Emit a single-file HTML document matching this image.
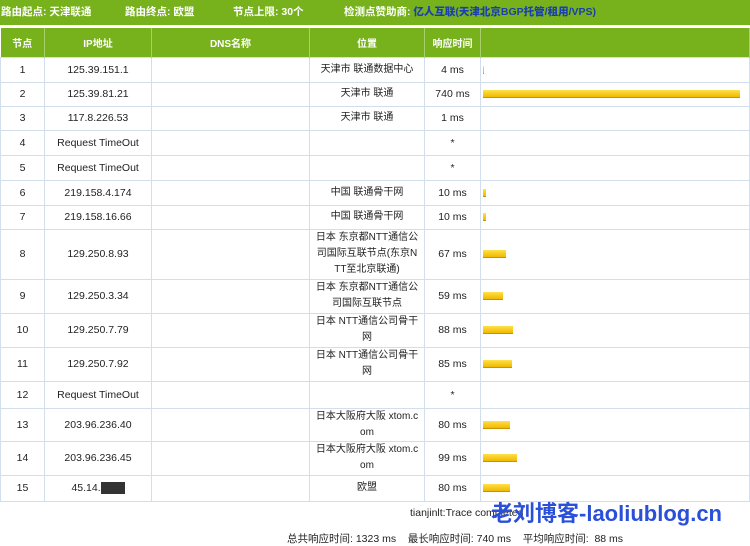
<!DOCTYPE html>
<html><head><meta charset="utf-8"><style>
*{margin:0;padding:0;box-sizing:border-box}
body{width:750px;height:545px;background:#fff;font-family:"Liberation Sans","Noto Sans CJK SC",sans-serif;font-size:10.5px;color:#222;position:relative;overflow:hidden}
.top{position:absolute;left:0;top:0;width:750px;height:25px;background:#77b21c;color:#fff;font-weight:bold;font-size:10.5px;line-height:25px;white-space:nowrap}
.top span{position:absolute;top:0}
table{position:absolute;left:0;top:28px;width:750px;border-collapse:collapse;table-layout:fixed}
th{background:#77b21c;color:#fff;font-weight:bold;height:29px;border-right:1px solid #a9d06a;font-size:10px}
td{border:1px solid #d2deec;text-align:center;line-height:16px;padding:0}
td.l{padding:0 4px;word-break:break-all;font-size:10px}
td.b{text-align:left;padding-left:2px}
.bar{display:block;height:8px;background:linear-gradient(#ffe14a,#f1b800);border-bottom:1px solid #c99300}
.foot{position:absolute;white-space:nowrap}
</style></head><body>
<div class="top"><span style="left:1px">路由起点: 天津联通</span><span style="left:125px">路由终点: 欧盟</span><span style="left:233px">节点上限: 30个</span><span style="left:344px">检测点赞助商: <b style="color:#1a3fb0">亿人互联</b><b style="color:#1a3fb0">(天津北京BGP托管/租用/VPS)</b></span></div>
<table>
<colgroup><col style="width:44px"><col style="width:107px"><col style="width:158px"><col style="width:115px"><col style="width:56px"><col></colgroup>
<tr><th>节点</th><th>IP地址</th><th>DNS名称</th><th>位置</th><th>响应时间</th><th></th></tr>
<tr style="height:25px"><td>1</td><td>125.39.151.1</td><td></td><td class="l">天津市 联通数据中心</td><td>4 ms</td><td class="b"><i class="bar" style="width:1px"></i></td></tr>
<tr style="height:24px"><td>2</td><td>125.39.81.21</td><td></td><td class="l">天津市 联通</td><td>740 ms</td><td class="b"><i class="bar" style="width:257px"></i></td></tr>
<tr style="height:24px"><td>3</td><td>117.8.226.53</td><td></td><td class="l">天津市 联通</td><td>1 ms</td><td></td></tr>
<tr style="height:25px"><td>4</td><td>Request TimeOut</td><td></td><td></td><td>*</td><td></td></tr>
<tr style="height:25px"><td>5</td><td>Request TimeOut</td><td></td><td></td><td>*</td><td></td></tr>
<tr style="height:25px"><td>6</td><td>219.158.4.174</td><td></td><td class="l">中国 联通骨干网</td><td>10 ms</td><td class="b"><i class="bar" style="width:3px"></i></td></tr>
<tr style="height:24px"><td>7</td><td>219.158.16.66</td><td></td><td class="l">中国 联通骨干网</td><td>10 ms</td><td class="b"><i class="bar" style="width:3px"></i></td></tr>
<tr style="height:50px"><td>8</td><td>129.250.8.93</td><td></td><td class="l">日本 东京都NTT通信公司国际互联节点(东京NTT至北京联通)</td><td>67 ms</td><td class="b"><i class="bar" style="width:23px"></i></td></tr>
<tr style="height:34px"><td>9</td><td>129.250.3.34</td><td></td><td class="l">日本 东京都NTT通信公司国际互联节点</td><td>59 ms</td><td class="b"><i class="bar" style="width:20px"></i></td></tr>
<tr style="height:34px"><td>10</td><td>129.250.7.79</td><td></td><td class="l">日本 NTT通信公司骨干网</td><td>88 ms</td><td class="b"><i class="bar" style="width:30px"></i></td></tr>
<tr style="height:34px"><td>11</td><td>129.250.7.92</td><td></td><td class="l">日本 NTT通信公司骨干网</td><td>85 ms</td><td class="b"><i class="bar" style="width:29px"></i></td></tr>
<tr style="height:27px"><td>12</td><td>Request TimeOut</td><td></td><td></td><td>*</td><td></td></tr>
<tr style="height:33px"><td>13</td><td>203.96.236.40</td><td></td><td class="l">日本大阪府大阪 xtom.com</td><td>80 ms</td><td class="b"><i class="bar" style="width:27px"></i></td></tr>
<tr style="height:34px"><td>14</td><td>203.96.236.45</td><td></td><td class="l">日本大阪府大阪 xtom.com</td><td>99 ms</td><td class="b"><i class="bar" style="width:34px"></i></td></tr>
<tr style="height:26px"><td>15</td><td>45.14.<span style="background:#333;color:#333">xx.xx</span></td><td></td><td class="l">欧盟</td><td>80 ms</td><td class="b"><i class="bar" style="width:27px"></i></td></tr>
</table>
<div class="foot" style="top:507px;left:410px">tianjinlt:Trace completed</div>
<div class="foot" style="top:531px;left:287px">总共响应时间: 1323 ms &nbsp;&nbsp; 最长响应时间: 740 ms &nbsp;&nbsp; 平均响应时间: &nbsp;88 ms</div>
<div style="position:absolute;left:491px;top:496px;font-size:22px;font-weight:bold;color:#2a4fd8;white-space:nowrap">老刘博客-laoliublog.cn</div>
</body></html>
